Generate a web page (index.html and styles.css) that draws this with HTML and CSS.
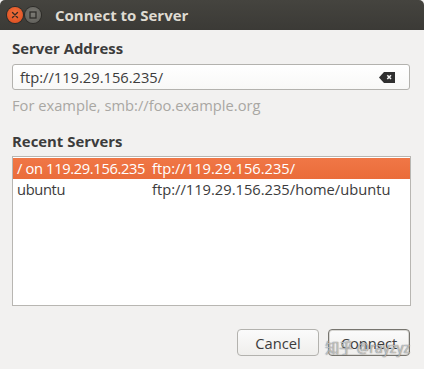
FILE: index.html
```html
<!DOCTYPE html>
<html>
<head>
<meta charset="utf-8">
<link rel="stylesheet" href="styles.css">
</head>
<body>
<div class="window">
  <div class="titlebar">
    <span class="wbtn close"><svg width="16" height="16" viewBox="0 0 16 16"><path d="M5.5 5.5 L10.5 10.5 M10.5 5.5 L5.5 10.5" stroke="#3a2a22" stroke-width="1.4" stroke-linecap="round"/></svg></span>
    <span class="wbtn max"><svg width="16" height="16" viewBox="0 0 16 16"><rect x="5" y="5" width="6" height="6" fill="none" stroke="#2e2d2a" stroke-width="1.3"/></svg></span>
    <span class="title">Connect to Server</span>
  </div>
  <div class="content">
    <div class="label">Server Address</div>
    <div class="entry">
      <span class="entry-text">ftp://119.29.156.235/</span>
      <svg class="clear" width="16" height="11" viewBox="0 0 16 11"><path d="M5 0 H16 V11 H5 L0 5.5 Z" fill="#2f2f2f"/><path d="M8.3 3.3 L12 7 M12 3.3 L8.3 7" stroke="#f5f5f5" stroke-width="1.6"/></svg>
    </div>
    <div class="hint">For example, smb://foo.example.org</div>
    <div class="label recent">Recent Servers</div>
    <div class="list">
      <div class="row selected"><span class="c1">/ on 119.29.156.235</span><span class="c2">ftp://119.29.156.235/</span></div>
      <div class="row"><span class="c1">ubuntu</span><span class="c2">ftp://119.29.156.235/home/ubuntu</span></div>
    </div>
    <div class="buttons">
      <button class="btn">Cancel</button>
      <button class="btn default">Connect</button>
    </div>
  </div>
  <div class="watermark">知乎 @rayzyz</div>
</div>
</body>
</html>
```

FILE: styles.css
```css
html, body {
  margin: 0;
  padding: 0;
  background: #f2f1f0;
}
body {
  font-family: "Open Sans", "Noto Sans CJK SC", sans-serif;
  font-size: 14.7px;
  color: #3c3c3c;
}
.window {
  position: relative;
  width: 424px;
  height: 369px;
  overflow: hidden;
  background: #f2f1f0;
}
.titlebar {
  height: 30px;
  background: linear-gradient(#45443f, #3b3a36);
  border-radius: 5px 5px 0 0;
  display: flex;
  align-items: center;
  padding-left: 7px;
  box-sizing: border-box;
}
.wbtn {
  width: 16px;
  height: 16px;
  border-radius: 50%;
  display: flex;
  align-items: center;
  justify-content: center;
  margin-right: 2px;
}
.wbtn.close {
  background: radial-gradient(circle at 50% 40%, #f4733d, #d9481c);
  box-shadow: 0 0 0 1px #2c2b28;
}
.wbtn.max {
  background: radial-gradient(circle at 50% 40%, #7b7a74, #5b5a55);
  box-shadow: 0 0 0 1px #2c2b28;
}
.title {
  margin-left: 12px;
  color: #dfdbd2;
  font-weight: bold;
  font-size: 15px;
}
.content {
  padding: 8px 12px 0 12px;
  display: flex;
  flex-direction: column;
}
.label {
  font-weight: bold;
  font-size: 14.9px;
  color: #3c3c3c;
  height: 20px;
  line-height: 20px;
}
.entry {
  margin-top: 6px;
  height: 26px;
  width: 398px;
  box-sizing: border-box;
  border: 1px solid #b3b2ae;
  border-radius: 3px;
  background: linear-gradient(#ffffff, #f8f8f7);
  display: flex;
  align-items: center;
  padding: 0 14px 0 7px;
}
.entry-text {
  flex: 1;
  color: #3c3c3c;
}
.clear {
  display: block;
}
.hint {
  margin-top: 5px;
  color: #a9a7a3;
  height: 20px;
  line-height: 20px;
}
.recent {
  margin-top: 16px;
}
.list {
  margin-top: 5px;
  width: 399px;
  height: 150px;
  box-sizing: border-box;
  border: 1px solid #b8b6b2;
  background: #ffffff;
  padding-top: 1px;
}
.row {
  display: grid;
  grid-template-columns: 135px 1fr;
  height: 21px;
  line-height: 21px;
  padding-left: 4px;
  color: #3c3c3c;
  white-space: nowrap;
}
.c1 {
  letter-spacing: -0.35px;
}
.row.selected {
  background: linear-gradient(#f07746, #ea6c3a);
  color: #ffffff;
}
.buttons {
  margin-top: 23px;
  display: flex;
  justify-content: flex-end;
  gap: 9px;
  padding-right: 2px;
}
.btn {
  width: 82px;
  height: 27px;
  font-family: inherit;
  font-size: 14.7px;
  color: #3c3c3c;
  border: 1px solid #b3b2ae;
  border-radius: 4px;
  background: linear-gradient(#fbfbfb, #efeeec);
  padding: 0;
}
.btn.default {
  border-color: #77756f;
  box-shadow: inset 0 0 0 1px #d8d7d4;
}
.watermark {
  position: absolute;
  right: 14px;
  bottom: 12px;
  font-size: 14px;
  color: rgba(255, 255, 255, 0.55);
  text-shadow: 0 0 1px rgba(90, 90, 90, 0.7), 0 0 1px rgba(90, 90, 90, 0.7);
  pointer-events: none;
}
```
